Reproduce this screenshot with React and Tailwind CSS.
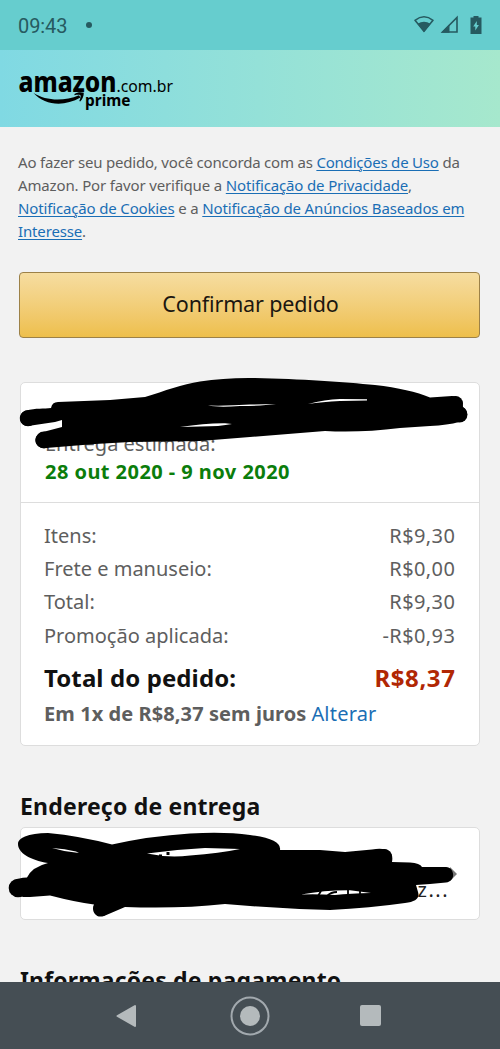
const summary = [
  { label: "Itens:", value: "R$9,30" },
  { label: "Frete e manuseio:", value: "R$0,00" },
  { label: "Total:", value: "R$9,30" },
  { label: "Promoção aplicada:", value: "-R$0,93" },
];

function StatusBar() {
  return (
    <div className="flex h-[50px] shrink-0 items-center bg-[#66cdce] pl-[18px] pr-[17px] text-[#265a60]">
      <span className="pt-px font-['Roboto',sans-serif] text-[20px] leading-6 tracking-[-0.1px]">09:43</span>
      <span className="ml-[19px] size-[6px] rounded-full bg-[#265a60]" />
      <div className="ml-auto flex items-center">
        <svg width="22" height="20" viewBox="0 0 22 20">
          <path d="M2 5.3 Q11 -1.7 20 5.3 L11 16.3 Z" fill="none" stroke="currentColor" strokeWidth="1.6" strokeLinejoin="round" />
          <path d="M4.5 8.800 Q11 4.8 17.500 8.800 L11 17 Z" fill="currentColor" />
        </svg>
        <svg className="ml-[5px]" width="20" height="20" viewBox="0 0 20 20">
          <path d="M2.5 17 L17 2.5 V17 Z" fill="none" stroke="currentColor" strokeWidth="1.6" />
          <path d="M1 17.8 L9.5 9.3 V17.8 Z" fill="currentColor" />
        </svg>
        <svg className="ml-[10px] mr-px" width="12" height="20" viewBox="0 0 12 20">
          <path d="M3.5 1 H8.500 V2.500 H11.500 V19 H0.500 V2.500 H3.500 Z" fill="currentColor" />
          <path d="M6.800 6 L3.200 11.500 H5.300 V15.500 L8.900 10 H6.800 Z" fill="#66cdce" />
        </svg>
      </div>
    </div>
  );
}

function Logo() {
  return (
    <svg
      className="overflow-visible font-['Noto_Sans',sans-serif]"
      width="160"
      height="60"
      viewBox="16 57 160 60"
      role="img"
      aria-label="amazon.com.br prime"
    >
      <text x="18.500" y="92" fontSize="27.500" fontWeight="800" textLength="98" lengthAdjust="spacingAndGlyphs">
        amazon
      </text>
      <text x="116.500" y="92" fontSize="17" textLength="56.500" lengthAdjust="spacingAndGlyphs">
        .com.br
      </text>
      <text x="85" y="105.500" fontSize="16" fontWeight="700" textLength="45.500" lengthAdjust="spacingAndGlyphs">
        prime
      </text>
      <path d="M33.500 93 C46 101 64 101.500 79 95.200 L80.500 97.500 C64 107 45 105.500 33.500 93 Z" />
      <path d="M74.500 94 C77.500 92 81 92 83.800 92.800 C83.800 96 82.500 99.500 80.200 101.500 L79.300 101 C80.300 98.500 81 96.500 80.500 95.300 C79 94.600 77 94.800 74.500 95.200 Z" />
    </svg>
  );
}

function TermsLink({ children }) {
  return (
    <a href="#" className="text-[#1a6eb5] underline decoration-[1px] underline-offset-[2px]">
      {children}
    </a>
  );
}

function Terms() {
  return (
    <div className="whitespace-nowrap text-[15px] leading-[23px] tracking-[-0.15px] text-[#5e5e5e]">
      <p className="tracking-[-0.2px]">
        Ao fazer seu pedido, você concorda com as <TermsLink>Condições de Uso</TermsLink> da
      </p>
      <p>
        Amazon. Por favor verifique a <TermsLink>Notificação de Privacidade</TermsLink>,
      </p>
      <p>
        <TermsLink>Notificação de Cookies</TermsLink> e a <TermsLink>Notificação de Anúncios Baseados em</TermsLink>
      </p>
      <p>
        <TermsLink>Interesse</TermsLink>.
      </p>
    </div>
  );
}

function DeliveryScribble() {
  return (
    <svg className="absolute -left-[2px] -top-[6px]" width="450" height="74" viewBox="19 377 450 74">
      <path d="M26 410.500 C36 408 44 409 51 408 Q52 402 58 402 L110 400 L145 397 C165 391 182 384 200 381.500 Q225 377.500 255 378 C300 379 345 382 375 385 Q410 389 430 397.500 L452 396 Q463 396 463 407 C470 412 467 421 459 422 Q448 425 430 426 L400 428 Q360 433 325 431 L250 437 L200 441 L130 442 L95 444 L46 448 C34 449 31 436 43 432 L62 427 V420 L55 422 L28 426 C18 426 17 413 26 410.500 Z" />
      <circle cx="28" cy="418.300" r="8" />
      <circle cx="44" cy="440" r="8.500" />
      <circle cx="455.500" cy="403.500" r="7.500" />
      <circle cx="459.500" cy="414.500" r="8" />
      <g fill="#fff">
        <path d="M208 405.500 Q228 406 250 404.500 L276 404 Q262 406 240 406 Q218 407.500 208 405.500 Z" />
        <path d="M180 427 Q205 423 225 423.200 L232 424 Q220 426.500 200 426.500 Z" />
        <path d="M308 404 Q325 399.500 340 399 L367 399.300 L367 400.500 L340 401 Q322 402 308 404 Z" />
      </g>
    </svg>
  );
}

function AddressScribble() {
  return (
    <svg className="absolute -left-[14px] top-[3px]" width="454" height="88" viewBox="7 831 454 88">
      <path d="M450 867 L457 874 L450 881 Z" fill="#777" />
      <path d="M25 836.500 Q33 833 48 833 Q80 836 112 844.500 Q150 836 190 833.500 Q225 831.500 250 835 Q282 839 280 850 L320 850 L345 852 L372 849.500 Q395 846 392 862 L410 862.500 Q420 863 422 867 L446 867 C455 867 456 882 446 882.500 L430 884 L416 885 L418 892 Q421 901 405 903 Q370 908 330 910 Q290 909 250 906 L225 904 Q180 909 125 907 L104 916 C95 919 91 910 94 904.500 Q75 902 50 895.500 L30 897 C3 898 3 878 27 877.500 Q32 867 48 863 C30 860 18 853 18 844 Q18 839 25 836.500 Z" />
      <circle cx="18" cy="888" r="9.300" />
      <circle cx="101.500" cy="908" r="8" />
      <circle cx="384" cy="857" r="8" />
      <g fill="#fff">
        <path d="M52 848 Q65 848.500 76 851.500 L79 853 Q65 852 52 848 Z" />
        <path d="M147 853.500 Q175 849.500 205 848 L240 849 Q220 853 190 855.500 Q168 858 147 853.500 Z" />
        <path d="M301 894.500 Q325 890 350 890.200 L371 893 Q350 893.500 335 895 Q318 894 301 894.500 Z" />
      </g>
      <path d="M159 854.500 h3 v3 h-3 Z M166.500 852 h3 v3 h-3 Z" />
      <path d="M318 896 L321 891 M327 896 Q331 892 337 892 M348 889 V896 M360 889 V896" stroke="#000" strokeWidth="1.800" fill="none" />
    </svg>
  );
}

function NavBar() {
  return (
    <div className="flex h-[67px] shrink-0 items-center bg-[#454e54] text-[#b4babc]">
      <svg className="ml-[116px]" width="21" height="24" viewBox="0 0 21 24">
        <path d="M1.500 12 L19 2 V22 Z" fill="currentColor" stroke="currentColor" strokeWidth="2" strokeLinejoin="round" />
      </svg>
      <svg className="ml-[93px]" width="40" height="40" viewBox="0 0 40 40">
        <circle cx="20" cy="20" r="18.500" fill="none" stroke="#a2a9ae" strokeWidth="2" />
        <circle cx="20" cy="20" r="10" fill="currentColor" />
      </svg>
      <span className="ml-[90px] size-[21px] rounded-[2px] bg-[#b4babc]" />
    </div>
  );
}

export default function App() {
  return (
    <div className="flex h-[1049px] w-[500px] flex-col overflow-hidden bg-[#f2f2f2] font-['Noto_Sans',sans-serif]">
      <StatusBar />
      <header className="flex h-[77px] shrink-0 items-start bg-linear-to-r from-[#80d9e3] to-[#a6e8cd] pl-4 pt-[7px]">
        <Logo />
      </header>

      <main className="min-h-0 flex-1 overflow-hidden px-5 pt-6">
        <div className="-ml-[2px]">
          <Terms />
        </div>

        <button className="-ml-px mt-[29px] flex h-[66px] w-[461px] items-center justify-center rounded-[4px] border border-[#9c8148] bg-linear-to-b from-[#f6dda0] to-[#eebf4b] pb-0.5 pl-0.5 text-[21.500px] tracking-[-0.15px] text-[#1c1710]">
          Confirmar pedido
        </button>

        <section className="relative mt-[44px] h-[364px] rounded-[5px] border border-[#dddddd] bg-white">
          <div className="flex h-[120px] flex-col justify-end border-b border-[#dddddd] pb-[16px] pl-[24px]">
            <p className="text-[20px] leading-7 text-[#5e5e5e]">Entrega estimada:</p>
            <p className="text-[20px] font-bold leading-7 tracking-[0.450px] text-[#0b7d0b]">28 out 2020 - 9 nov 2020</p>
          </div>
          <div className="pl-[23px] pr-6 pt-[16px]">
            {summary.map((row) => (
              <div key={row.label} className="flex h-[33.300px] items-center justify-between text-[20px] text-[#5e5e5e]">
                <span>{row.label}</span>
                <span className="-mr-[0.300px] tracking-[0.400px]">{row.value}</span>
              </div>
            ))}
            <div className="mt-[8px] flex h-9 items-center justify-between text-[24px] font-bold">
              <span className="tracking-[0.100px] text-[#111111]">Total do pedido:</span>
              <span className="-mr-[0.500px] tracking-[0.600px] text-[#b12704]">R$8,37</span>
            </div>
            <p className="flex h-[35px] items-center gap-[5px] whitespace-nowrap text-[20px]">
              <b className="tracking-[0.080px] text-[#5e5e5e]">Em 1x de R$8,37 sem juros</b>
              <a href="#" className="tracking-[0.200px] text-[#1a6eb5]">
                Alterar
              </a>
            </p>
          </div>
          <DeliveryScribble />
        </section>

        <h2 className="mt-[44px] text-[23px] font-bold leading-8 tracking-[0.200px] text-[#111111]">Endereço de entrega</h2>
        <section className="relative mt-[5px] flex h-[93px] items-end justify-end rounded-[5px] border border-[#dddddd] bg-white pb-[15px] pr-[30px]">
          <span className="text-[20px] leading-7 tracking-[1.500px] text-[#222222]">z...</span>
          <AddressScribble />
        </section>

        <h2 className="mt-[44px] text-[23px] font-bold leading-8 tracking-[0.160px] text-[#111111]">
          Informações de pagamento
        </h2>
      </main>

      <NavBar />
    </div>
  );
}
